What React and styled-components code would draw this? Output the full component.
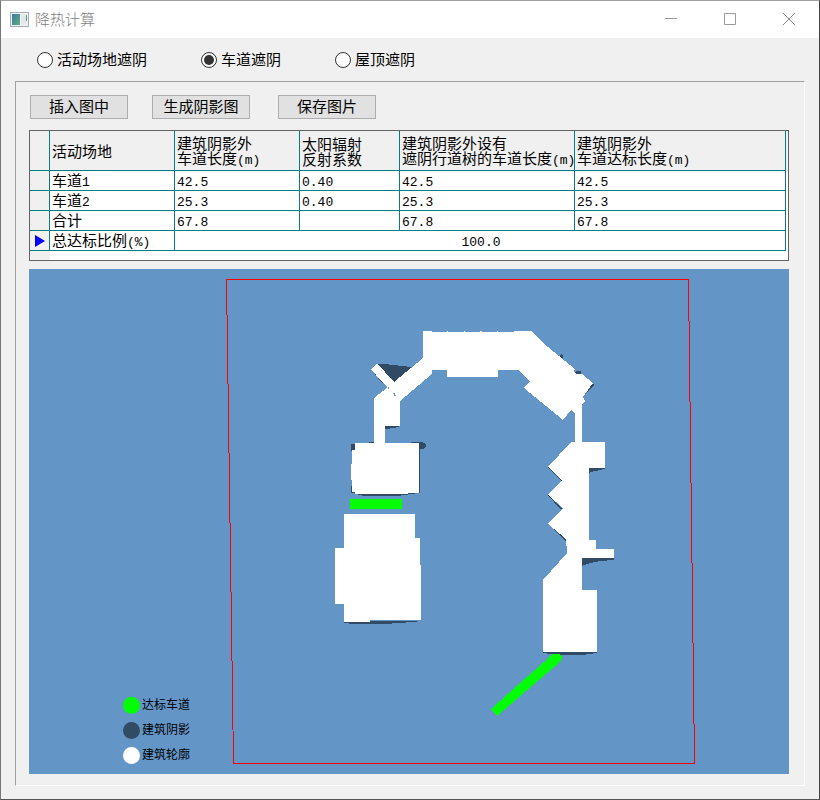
import { useState } from "react";
import styled, { createGlobalStyle, css } from "styled-components";

const GlobalStyle = createGlobalStyle`
  * {
    box-sizing: border-box;
  }
  body {
    margin: 0;
    background: #f0f0f0;
    color: #000;
    font-family: "Liberation Sans", "Noto Sans CJK SC", sans-serif;
    font-size: 15px;
    line-height: 15px;
  }
`;

const Window = styled.div`
  min-height: 100vh;
  display: flex;
  flex-direction: column;
  background: #f0f0f0;
  border: 1px solid;
  border-color: #a0a0a0 #444 #555 #777;
`;

const TitleBar = styled.header`
  display: flex;
  align-items: center;
  height: 37px;
  padding-left: 9px;
  background: #fff;
`;

const Title = styled.h1`
  flex: 1;
  margin: 0 0 0 6px;
  font-size: 15px;
  font-weight: 300;
  color: #808080;
`;

const CaptionButton = styled.button`
  display: flex;
  align-items: center;
  justify-content: center;
  width: 59px;
  height: 37px;
  padding: 0 2px 2px 0;
  border: none;
  background: none;
  &:hover {
    background: #e5e5e5;
  }
`;

const RadioRow = styled.div`
  display: flex;
  align-items: center;
  height: 43px;
  padding-left: 36px;
`;

const RadioLabel = styled.label`
  display: flex;
  align-items: center;
  gap: 4px;
  line-height: 17px;
  margin-right: ${(props) => props.$space || 0}px;
`;

const Radio = styled.input`
  appearance: none;
  display: grid;
  place-items: center;
  width: 16px;
  height: 16px;
  margin: 0;
  border: 1px solid #333;
  border-radius: 50%;
  background: #fff;
  &:checked::before {
    content: "";
    width: 10px;
    height: 10px;
    border-radius: 50%;
    background: #333;
  }
`;

const Panel = styled.main`
  flex: 1;
  margin: 0 14px 13px;
  padding: 13px 15px 11px 13px;
  border: 1px solid;
  border-color: #a0a0a0 #fff #fff #a0a0a0;
`;

const Toolbar = styled.div`
  display: flex;
  padding-left: 1px;
  margin-bottom: 11px;
`;

const Button = styled.button`
  width: 98px;
  height: 24px;
  margin-right: ${(props) => props.$space || 0}px;
  padding: 0 0 2px;
  border: 1px solid #adadad;
  background: #e1e1e1;
  color: #000;
  font: inherit;
  &:hover {
    border-color: #0078d7;
    background: #e5f1fb;
  }
`;

const GridFrame = styled.div`
  padding: 0 2px 9px 0;
  margin-bottom: 8px;
  border: 1px solid #646464;
  background: linear-gradient(to right, #f0f0f0 20px, transparent 20px),
    linear-gradient(#f0f0f0 40px, #fff 40px);
`;

const Grid = styled.table`
  width: 100%;
  table-layout: fixed;
  border-spacing: 0;
`;

const Col = styled.col`
  width: ${(props) => props.$width};
`;

const cell = css`
  height: 20px;
  padding: 1px 0 0 2px;
  border: solid #008080;
  border-width: 0 1px 1px 0;
  font-weight: 400;
  text-align: left;
  white-space: nowrap;
`;

const HeadCell = styled.th`
  ${cell}
  height: 40px;
  padding-top: 2px;
`;

const Marker = styled.td`
  ${cell}
  padding: 0 0 0 5px;
  background: #f0f0f0;
  & > svg {
    display: block;
  }
`;

const Cell = styled.td`
  ${cell}
  background: #fff;
  text-align: ${(props) => props.$align || "left"};
`;

const Mono = styled.span`
  font-family: "Liberation Mono", monospace;
  font-size: 13px;
`;

const Drawing = styled.figure`
  position: relative;
  margin: 0;
  background: #6495c7;
  & > svg {
    display: block;
    width: 100%;
    height: auto;
  }
`;

const Legend = styled.ul`
  position: absolute;
  left: 94px;
  bottom: 10px;
  display: grid;
  gap: 8px;
  margin: 0;
  padding: 0;
  list-style: none;
  font-size: 12px;
  line-height: 17px;
`;

const LegendItem = styled.li`
  display: flex;
  align-items: center;
  gap: 2px;
  &::before {
    content: "";
    width: 17px;
    height: 17px;
    border-radius: 50%;
    background: ${(props) => props.$color};
  }
`;

const modes = [
  { id: "site", label: "活动场地遮阴", space: 54 },
  { id: "lane", label: "车道遮阴", space: 54 },
  { id: "roof", label: "屋顶遮阴" },
];

const rows = [
  { name: "车道", no: "1", values: ["42.5", "0.40", "42.5", "42.5"] },
  { name: "车道", no: "2", values: ["25.3", "0.40", "25.3", "25.3"] },
  { name: "合计", no: "", values: ["67.8", "", "67.8", "67.8"] },
];

const legend = [
  { color: "#00ff00", label: "达标车道" },
  { color: "#324b64", label: "建筑阴影" },
  { color: "#ffffff", label: "建筑轮廓" },
];

function AppIcon() {
  return (
    <svg width="19" height="16" viewBox="0 0 19 16">
      <defs>
        <linearGradient id="screen" x1="0" y1="0" x2="1" y2="1">
          <stop offset="0" stopColor="#3f78a8" />
          <stop offset="1" stopColor="#58b27a" />
        </linearGradient>
      </defs>
      <rect x="0.5" y="0.5" width="18" height="14" fill="#f4f4f4" stroke="#a3abb3" />
      <rect x="2" y="2" width="8" height="11" fill="url(#screen)" />
      <rect x="11" y="2" width="5" height="11" fill="#e4e8ec" />
      <rect x="16" y="3" width="1" height="6" fill="#4fa27f" />
    </svg>
  );
}

function ShadowPlan() {
  return (
    <svg viewBox="29 269 760 505" shapeRendering="crispEdges">
      {/* shadows */}
      <g fill="#324b64">
        <path d="M376 364L385 364L411 367L412 369L394 384Z" />
        <path d="M371 369L374 369L384 382L382 383Z" />
        <path d="M385 426H399V427L387 429H385Z" />
        <path d="M351 444H356V451H351Z M351 486H356V493H351Z" />
        <path d="M369 443V442H374V444Z M403 442H422L426 444V447L423 449H420V493H418L397 496H364L353 493V490H419V443Z" />
        <path d="M344 621H421V621L412 622L399 623L384 624H353L344 623Z" />
        <path d="M558 357L561 354L563 355V358Z M574 373L577 371H581V374L578 376Z" />
        <path d="M593 383L594 385L587 393L585 391Z" />
        <path d="M588 468H606L600 470L591 472L588 474Z" />
        <path d="M548 467L566 484L562 482Z M548 495L564 510L560 509Z M548 524L566 541V538Z" />
        <path d="M582 558H614V560L600 561L590 563L582 566Z" />
        <path d="M543 652H597V653L582 655H560L543 653Z" />
      </g>
      {/* building outlines */}
      <g fill="#fff">
        <path d="M423 331H432V332H447V331H448V332H464V331H465V332H480V331H482V332H497V331H498V332H514V331H531L535 335L548 347L549 346V348L575 369L573 371L577 374L582 374L593 383L583 397L585 401L582 405V442H605V468H589V540H596V549H614V558H582V590H597V652H543V580L567 553L566 539L548 524L563 508L548 495L562 480L548 467L571 442H575V413L571 410L563 420L524 388L530 381L518 370H498V377H447V370H432V374L400 401V426H385V443H419V493H408L407 494H355V492H352V480H351V478L352 450H355V443H374V398L388 387L382 382L371 369L377 363L394 382L423 358Z" />
        <path d="M344 514H415V538H420V565H421V620H370V622H344V604H335V548H344Z" />
      </g>
      <path fill="#6495c7" d="M393 393H395V395H396V396H394V394H393Z M388 387H389V389H388Z" />
      {/* lanes that meet the target */}
      <g fill="#0f0">
        <path d="M350 499H402V509H350Z" />
        <path d="M553 654H559L562 657L561 661L497 716L491 709Z" />
      </g>
      <path
        d="M226.500 279.500H688.500L694.500 763.500H233.500Z"
        fill="none"
        stroke="#f00"
      />
    </svg>
  );
}

export default function App() {
  const [mode, setMode] = useState("lane");

  return (
    <>
      <GlobalStyle />
      <Window>
        <TitleBar>
          <AppIcon />
          <Title>降热计算</Title>
          <CaptionButton aria-label="最小化">
            <svg width="12" height="13" stroke="#999" fill="none">
              <path d="M0 6.500H12" />
            </svg>
          </CaptionButton>
          <CaptionButton aria-label="最大化">
            <svg width="12" height="12" stroke="#999" fill="none">
              <path d="M0.500 0.500H11.500V11.500H0.500Z" />
            </svg>
          </CaptionButton>
          <CaptionButton aria-label="关闭">
            <svg width="12" height="12" stroke="#888" fill="none">
              <path d="M0 0L12 12M12 0L0 12" />
            </svg>
          </CaptionButton>
        </TitleBar>
        <RadioRow>
          {modes.map((m) => (
            <RadioLabel key={m.id} $space={m.space}>
              <Radio
                type="radio"
                name="mode"
                checked={mode === m.id}
                onChange={() => setMode(m.id)}
              />
              {m.label}
            </RadioLabel>
          ))}
        </RadioRow>
        <Panel>
          <Toolbar>
            <Button $space={24}>插入图中</Button>
            <Button $space={28}>生成阴影图</Button>
            <Button>保存图片</Button>
          </Toolbar>
          <GridFrame>
            <Grid>
              <colgroup>
                <Col $width="20px" />
                <Col $width="125px" />
                <Col $width="125px" />
                <Col $width="100px" />
                <Col $width="175px" />
                <Col $width="auto" />
              </colgroup>
              <thead>
                <tr>
                  <HeadCell />
                  <HeadCell>活动场地</HeadCell>
                  <HeadCell>
                    建筑阴影外
                    <br />
                    车道长度<Mono>(m)</Mono>
                  </HeadCell>
                  <HeadCell>
                    太阳辐射
                    <br />
                    反射系数
                  </HeadCell>
                  <HeadCell>
                    建筑阴影外设有
                    <br />
                    遮阴行道树的车道长度<Mono>(m)</Mono>
                  </HeadCell>
                  <HeadCell>
                    建筑阴影外
                    <br />
                    车道达标长度<Mono>(m)</Mono>
                  </HeadCell>
                </tr>
              </thead>
              <tbody>
                {rows.map((row) => (
                  <tr key={row.name + row.no}>
                    <Marker />
                    <Cell>
                      {row.name}
                      <Mono>{row.no}</Mono>
                    </Cell>
                    {row.values.map((value, i) => (
                      <Cell key={i}>
                        <Mono>{value}</Mono>
                      </Cell>
                    ))}
                  </tr>
                ))}
                <tr>
                  <Marker>
                    <svg width="10" height="12" fill="#00f">
                      <path d="M0 0L10 6L0 12Z" />
                    </svg>
                  </Marker>
                  <Cell>
                    总达标比例<Mono>(%)</Mono>
                  </Cell>
                  <Cell colSpan={4} $align="center">
                    <Mono>100.0</Mono>
                  </Cell>
                </tr>
              </tbody>
            </Grid>
          </GridFrame>
          <Drawing>
            <ShadowPlan />
            <Legend>
              {legend.map((item) => (
                <LegendItem key={item.label} $color={item.color}>
                  {item.label}
                </LegendItem>
              ))}
            </Legend>
          </Drawing>
        </Panel>
      </Window>
    </>
  );
}
